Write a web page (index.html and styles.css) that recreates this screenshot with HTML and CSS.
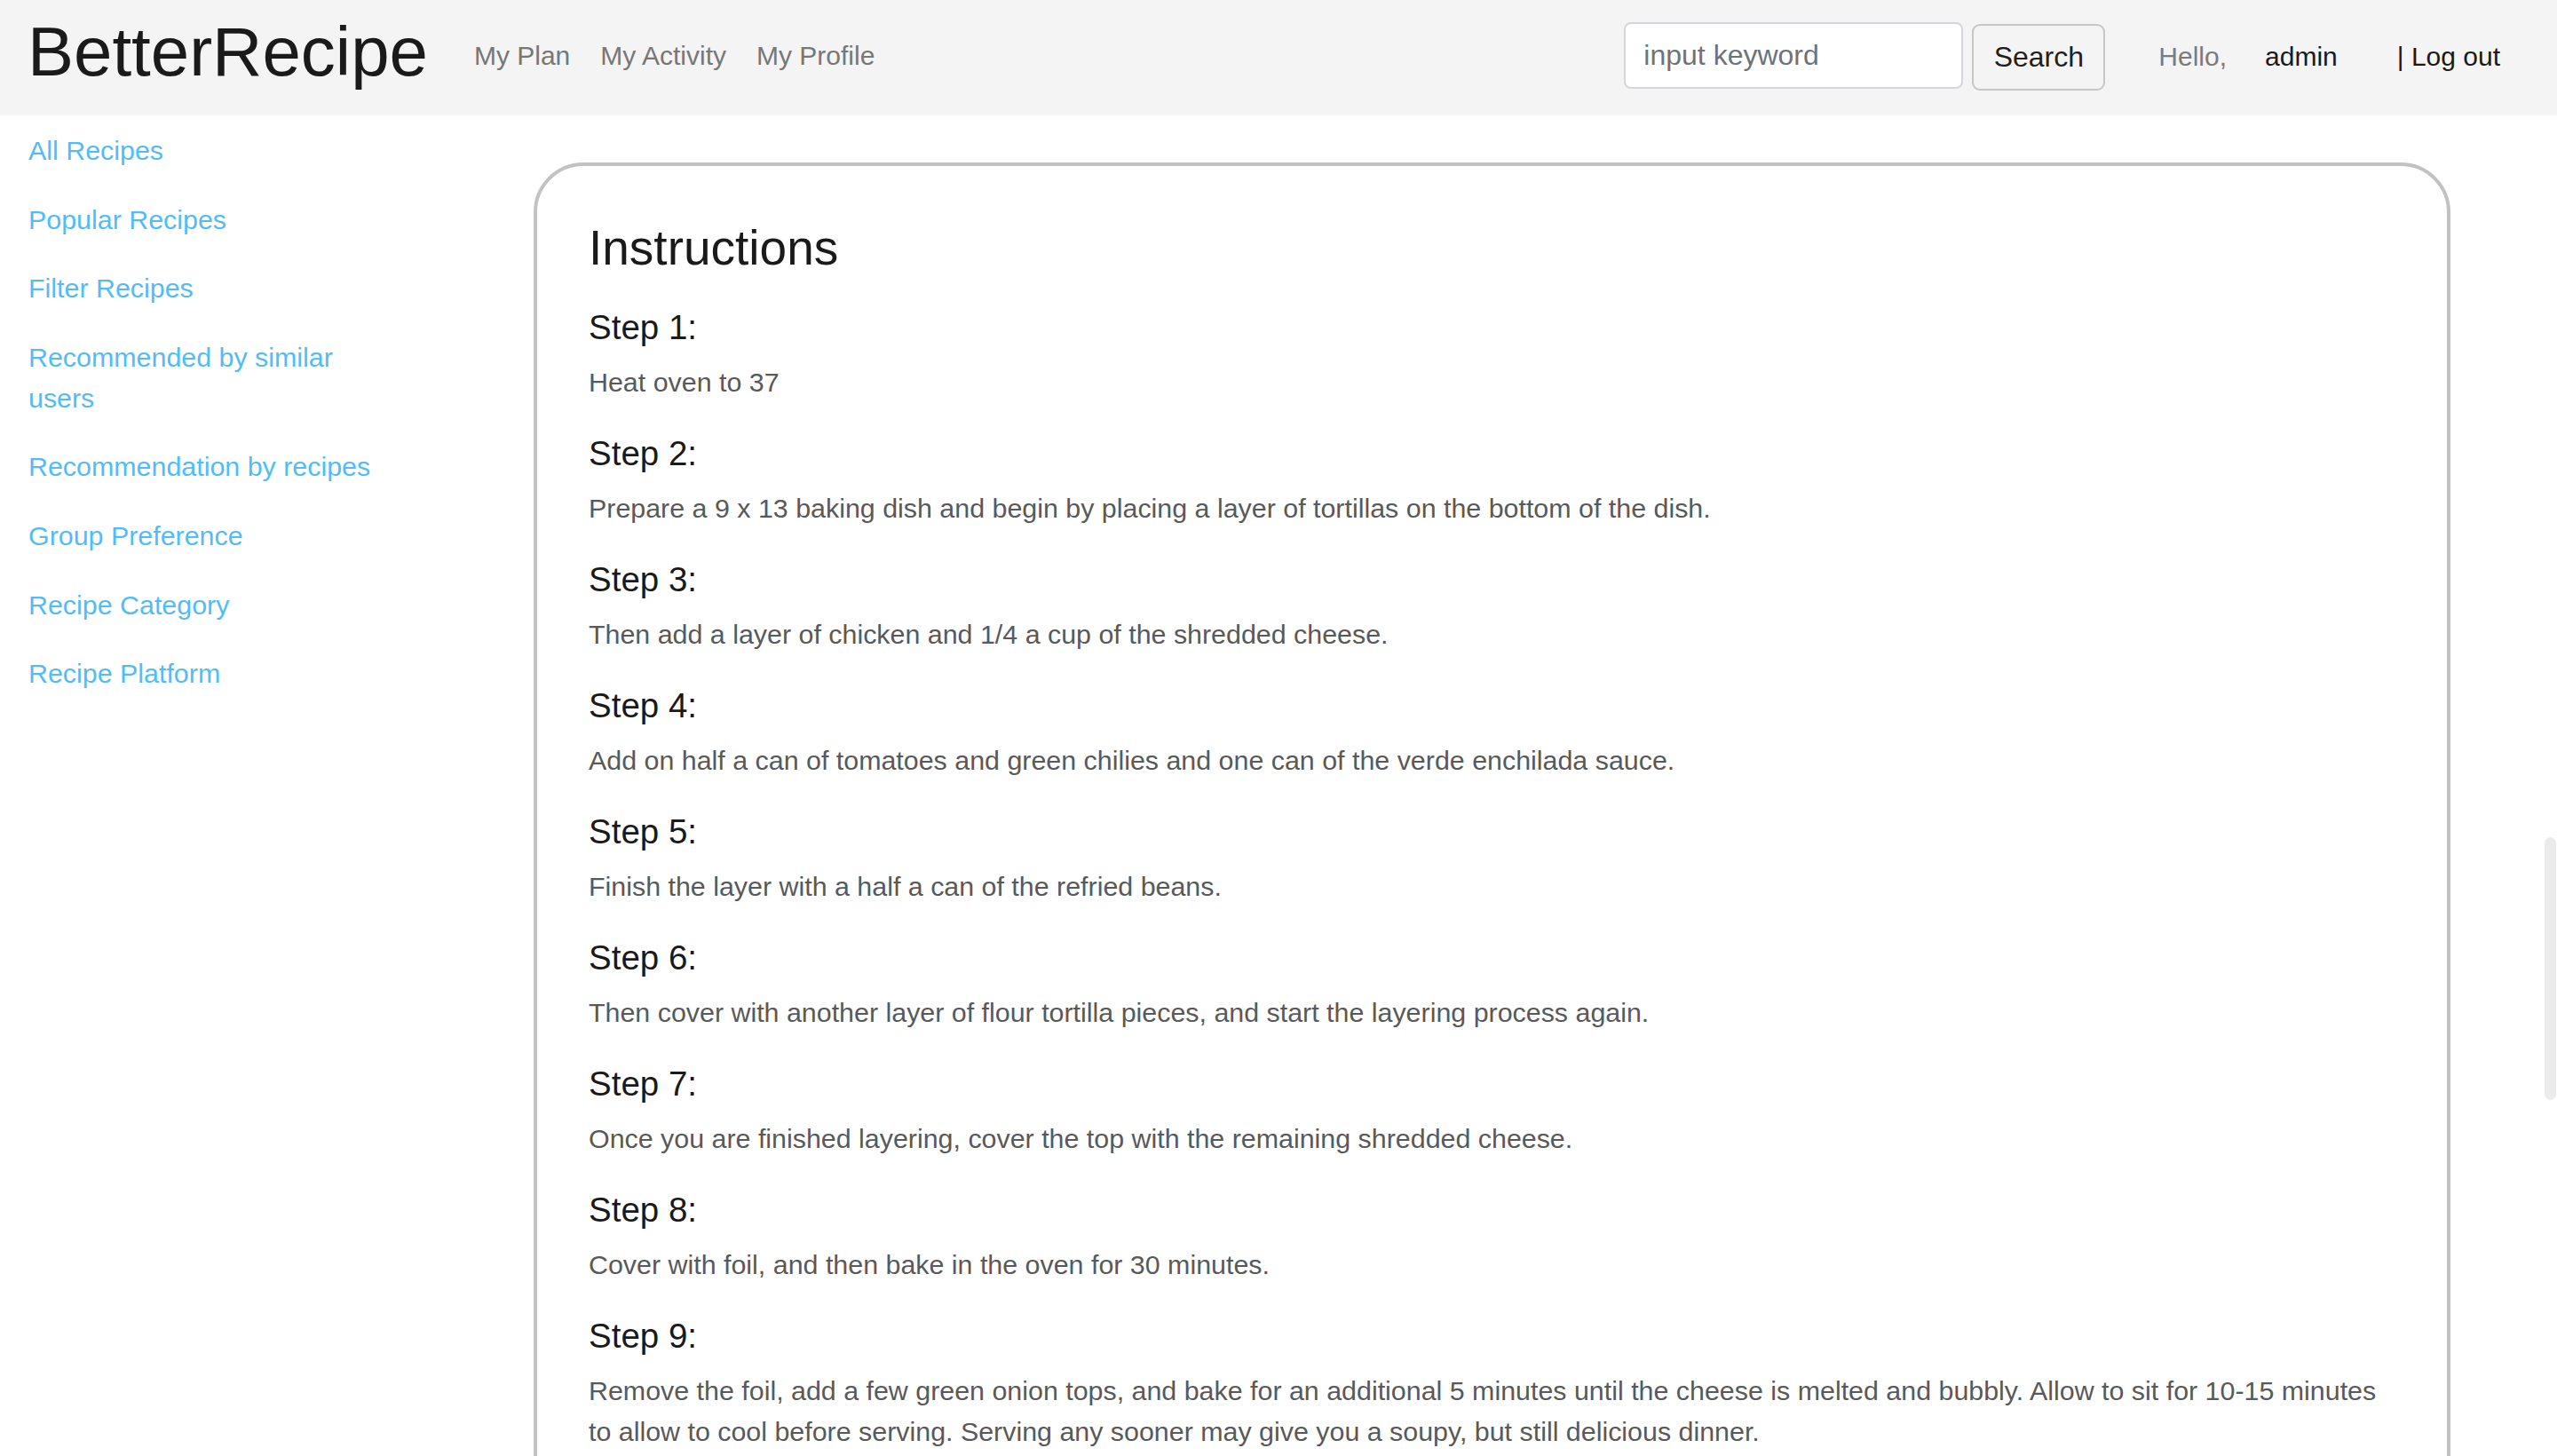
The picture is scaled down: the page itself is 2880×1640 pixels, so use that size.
FILE: index.html
```html
<!DOCTYPE html>
<html lang="en">
<head>
<meta charset="utf-8">
<title>BetterRecipe</title>
<link rel="stylesheet" href="styles.css">
</head>
<body>
<header class="topbar">
  <a class="brand" href="#">BetterRecipe</a>
  <nav class="mainnav">
    <a href="#">My Plan</a>
    <a href="#">My Activity</a>
    <a href="#">My Profile</a>
  </nav>
  <form class="search">
    <input class="search-input" type="text" placeholder="input keyword">
    <button class="search-btn" type="button">Search</button>
  </form>
  <div class="user">
    <span class="hello">Hello,</span>
    <a class="username" href="#">admin</a>
    <a class="logout" href="#">| Log out</a>
  </div>
</header>
<div class="layout">
  <aside class="sidebar">
    <a href="#">All Recipes</a>
    <a href="#">Popular Recipes</a>
    <a href="#">Filter Recipes</a>
    <a href="#">Recommended by similar users</a>
    <a href="#">Recommendation by recipes</a>
    <a href="#">Group Preference</a>
    <a href="#">Recipe Category</a>
    <a href="#">Recipe Platform</a>
  </aside>
  <main class="main">
    <section class="card">
      <h2 class="card-title">Instructions</h2>
      <div class="step"><h4>Step 1:</h4><p>Heat oven to 37</p></div>
      <div class="step"><h4>Step 2:</h4><p>Prepare a 9 x 13 baking dish and begin by placing a layer of tortillas on the bottom of the dish.</p></div>
      <div class="step"><h4>Step 3:</h4><p>Then add a layer of chicken and 1/4 a cup of the shredded cheese.</p></div>
      <div class="step"><h4>Step 4:</h4><p>Add on half a can of tomatoes and green chilies and one can of the verde enchilada sauce.</p></div>
      <div class="step"><h4>Step 5:</h4><p>Finish the layer with a half a can of the refried beans.</p></div>
      <div class="step"><h4>Step 6:</h4><p>Then cover with another layer of flour tortilla pieces, and start the layering process again.</p></div>
      <div class="step"><h4>Step 7:</h4><p>Once you are finished layering, cover the top with the remaining shredded cheese.</p></div>
      <div class="step"><h4>Step 8:</h4><p>Cover with foil, and then bake in the oven for 30 minutes.</p></div>
      <div class="step"><h4>Step 9:</h4><p>Remove the foil, add a few green onion tops, and bake for an additional 5 minutes until the cheese is melted and bubbly. Allow to sit for 10-15 minutes to allow to cool before serving. Serving any sooner may give you a soupy, but still delicious dinner.</p></div>
    </section>
  </main>
</div>
<div class="scroll-thumb"></div>
</body>
</html>
```
FILE: styles.css
```css
html, body {
  margin: 0;
  padding: 0;
  height: 1640px;
  overflow: hidden;
}
body {
  font-family: "Liberation Sans", Arial, Helvetica, sans-serif;
  background: #ffffff;
  color: #1d1d1d;
  position: relative;
}
a { text-decoration: none; }

.topbar {
  height: 130px;
  background: #f4f4f4;
  display: flex;
  align-items: center;
  padding: 0 64px 0 31px;
  box-sizing: border-box;
}
.brand {
  font-size: 78px;
  line-height: 90px;
  color: #1a1a1a;
  margin-bottom: 14px;
}
.mainnav {
  display: flex;
  gap: 34px;
  margin-left: 52px;
  margin-bottom: 5px;
}
.mainnav a {
  font-size: 30px;
  line-height: 46px;
  color: #777777;
}
.search {
  margin-left: auto;
  margin-right: -2px;
  display: flex;
  align-items: center;
  gap: 10px;
  margin-bottom: 5px;
}
.search-input {
  width: 382px;
  height: 75px;
  box-sizing: border-box;
  border: 2px solid #d3d7db;
  border-radius: 8px;
  background: #ffffff;
  padding: 0 20px;
  font-family: inherit;
  font-size: 32px;
  color: #333;
  outline: none;
}
.search-input::placeholder { color: #6c737b; }
.search-btn {
  width: 150px;
  height: 75px;
  margin-top: 4px;
  box-sizing: border-box;
  border: 2px solid #c6c6c6;
  border-radius: 9px;
  background: #f4f4f4;
  font-family: inherit;
  font-size: 32px;
  color: #1f1f1f;
  padding: 0;
}
.user {
  display: flex;
  align-items: baseline;
  margin-left: 62px;
  margin-bottom: 3px;
  font-size: 30px;
  line-height: 46px;
}
.hello { color: #7b7b7b; }
.username { color: #1a1a1a; margin-left: 43px; }
.logout { color: #1a1a1a; margin-left: 67px; }

.layout {
  display: grid;
  grid-template-columns: 601px 1fr;
}
.sidebar {
  display: flex;
  flex-direction: column;
  align-items: flex-start;
  gap: 31.6px;
  padding: 16px 0 0 32px;
}
.sidebar a {
  font-size: 30.4px;
  line-height: 46px;
  color: #52bcf8;
  max-width: 415px;
}
.main {
  padding: 53px 120px 0 0;
}
.card {
  border: 4px solid #c2c2c2;
  border-radius: 56px;
  padding: 58px 58px 200px 58px;
}
.card-title {
  margin: 0 0 33px 0;
  font-size: 55px;
  line-height: 68px;
  font-weight: 400;
  color: #1a1a1a;
}
.step h4 {
  margin: 0 0 15px 0;
  font-size: 38.5px;
  line-height: 46px;
  font-weight: 400;
  color: #1a1a1a;
}
.step p {
  margin: 0 0 35px 0;
  font-size: 30.4px;
  line-height: 46px;
  color: #595959;
}
.scroll-thumb {
  position: absolute;
  right: 1px;
  top: 943px;
  width: 13px;
  height: 296px;
  border-radius: 7px;
  background: #ebebeb;
}
```
